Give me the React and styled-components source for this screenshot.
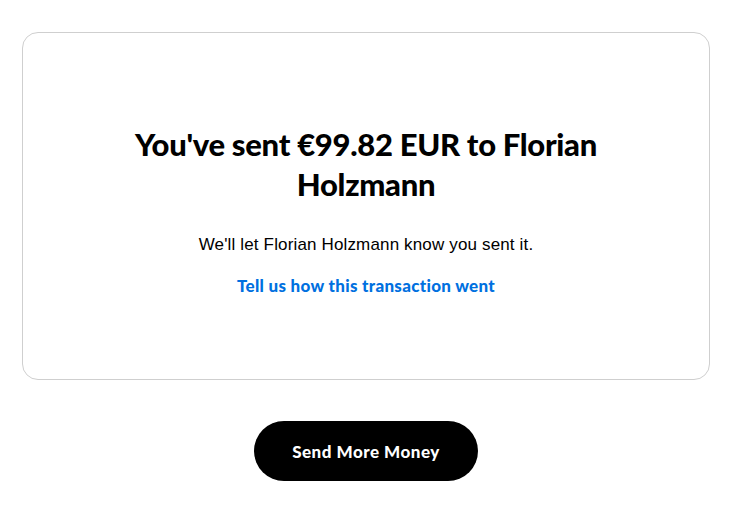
import React from "react"
import styled, { createGlobalStyle } from "styled-components"

const GlobalStyle = createGlobalStyle`
  body {
    margin: 0;
    background: #ffffff;
    font-family: "Lato", "Liberation Sans", sans-serif;
    color: #000;
  }
`

const Page = styled.main`
  width: 688px;
  padding: 32px 0 0 22px;
  display: flex;
  flex-direction: column;
  align-items: center;
`

const Card = styled.section`
  box-sizing: border-box;
  width: 100%;
  height: 348px;
  border: 1px solid #cfcfcf;
  border-radius: 16px;
  display: flex;
  flex-direction: column;
  align-items: center;
  justify-content: center;
  text-align: center;
  padding: 10px 24px 0;
`

const Heading = styled.h1`
  margin: 0;
  max-width: 500px;
  font-family: "Lato", sans-serif;
  font-weight: 900;
  font-size: 31px;
  line-height: 40px;
  letter-spacing: -0.3px;
`

const Message = styled.p`
  margin: 29px 0 0;
  font-family: "Liberation Sans", Arial, sans-serif;
  font-size: 17px;
  line-height: 24px;
  letter-spacing: 0.15px;
`

const FeedbackLink = styled.a`
  margin-top: 17px;
  font-family: "Lato", sans-serif;
  font-weight: 900;
  font-size: 17px;
  line-height: 24px;
  letter-spacing: 0.3px;
  color: #0070e0;
  text-decoration: none;
`

const PrimaryButton = styled.button`
  margin-top: 41px;
  width: 224px;
  height: 60px;
  border: none;
  border-radius: 30px;
  background: #000;
  color: #fff;
  font-family: "Lato", sans-serif;
  font-weight: 900;
  font-size: 17px;
  letter-spacing: 0.5px;
  cursor: pointer;
`

export default function App() {
  return (
    <>
      <GlobalStyle />
      <Page>
        <Card>
          <Heading>You've sent €99.82 EUR to Florian Holzmann</Heading>
          <Message>We'll let Florian Holzmann know you sent it.</Message>
          <FeedbackLink href="#">Tell us how this transaction went</FeedbackLink>
        </Card>
        <PrimaryButton>Send More Money</PrimaryButton>
      </Page>
    </>
  )
}
